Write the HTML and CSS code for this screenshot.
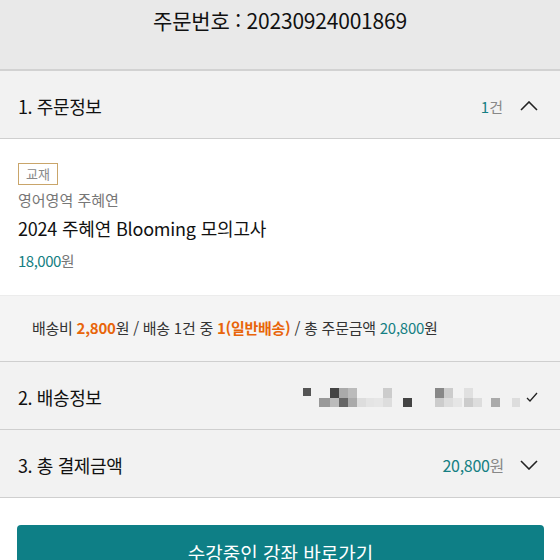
FILE: index.html
```html
<!DOCTYPE html>
<html lang="ko">
<head>
    <meta charset="UTF-8">
    <meta name="viewport" content="width=device-width, initial-scale=1.0">
    <title>주문완료</title>
    <link rel="stylesheet" href="styles.css">
</head>
<body>
    <div class="order-header">
        <h1 class="order-no">주문번호 : 20230924001869</h1>
    </div>

    <div class="section-row">
        <span class="section-title">1. 주문정보</span>
        <div class="section-right">
            <span class="count"><em>1</em>건</span>
            <svg class="chevron" width="18" height="10" viewBox="0 0 18 10"><path d="M1 9 L9 1 L17 9" fill="none" stroke="#222" stroke-width="1.6"/></svg>
        </div>
    </div>

    <div class="product">
        <span class="badge">교재</span>
        <div class="teacher">영어영역 주혜연</div>
        <div class="product-name">2024 주혜연 Blooming 모의고사</div>
        <div class="price">18,000<span>원</span></div>
    </div>

    <div class="delivery-summary">
        배송비 <b class="orange">2,800</b>원 / 배송 1건 중 <b class="orange">1(일반배송)</b> / 총 주문금액 <span class="teal">20,800</span>원
    </div>

    <div class="section-row">
        <span class="section-title">2. 배송정보</span>
        <div class="section-right">
            <svg class="masked" width="220" height="24" viewBox="0 0 220 24">
                <rect x="3" y="3" width="8" height="8" fill="#555"/>
                <rect x="30" y="3" width="9" height="10" fill="#444"/>
                <rect x="39" y="3" width="9" height="10" fill="#aaa"/>
                <rect x="48" y="3" width="9" height="10" fill="#bbb"/>
                <rect x="19" y="13" width="11" height="9" fill="#999"/>
                <rect x="30" y="13" width="9" height="9" fill="#bbb"/>
                <rect x="39" y="13" width="9" height="9" fill="#666"/>
                <rect x="48" y="13" width="9" height="9" fill="#aaa"/>
                <rect x="57" y="13" width="9" height="9" fill="#ddd"/>
                <rect x="66" y="13" width="9" height="9" fill="#e4e4e4"/>
                <rect x="83" y="3" width="9" height="10" fill="#ccc"/>
                <rect x="74" y="13" width="9" height="9" fill="#e6e6e6"/>
                <rect x="83" y="13" width="9" height="9" fill="#ddd"/>
                <rect x="103" y="13" width="9" height="9" fill="#444"/>
                <rect x="135" y="3" width="9" height="10" fill="#888"/>
                <rect x="144" y="3" width="9" height="10" fill="#ccc"/>
                <rect x="135" y="13" width="9" height="9" fill="#ccc"/>
                <rect x="144" y="13" width="9" height="9" fill="#ddd"/>
                <rect x="153" y="13" width="9" height="9" fill="#e6e6e6"/>
                <rect x="164" y="3" width="9" height="10" fill="#e0e0e0"/>
                <rect x="164" y="13" width="9" height="9" fill="#ccc"/>
                <rect x="173" y="13" width="9" height="9" fill="#ddd"/>
                <rect x="191" y="13" width="9" height="9" fill="#aaa"/>
                <rect x="212" y="13" width="8" height="9" fill="#ddd"/>
            </svg>
            <svg class="check" width="12" height="12" viewBox="0 0 12 12"><path d="M1 7 L4 10 L11 2" fill="none" stroke="#222" stroke-width="1.3"/></svg>
        </div>
    </div>

    <div class="section-row">
        <span class="section-title">3. 총 결제금액</span>
        <div class="section-right">
            <span class="total"><em>20,800</em>원</span>
            <svg class="chevron" width="18" height="10" viewBox="0 0 18 10"><path d="M1 1 L9 9 L17 1" fill="none" stroke="#222" stroke-width="1.6"/></svg>
        </div>
    </div>

    <div class="actions">
        <button class="go-button">수강중인 강좌 바로가기</button>
    </div>
</body>
</html>
```

FILE: styles.css
```css
body {
    margin: 0;
    background-color: #fff;
    font-family: "Noto Sans CJK KR", "Noto Sans", sans-serif;
    color: #111;
}
.order-header {
    height: 71px;
    box-sizing: border-box;
    padding-top: 6px;
    background-color: #e9e9e9;
    border-bottom: 2px solid #d2d2d2;
}
.order-no {
    margin: 0;
    font-size: 21px;
    font-weight: normal;
    line-height: 28px;
    text-align: center;
    letter-spacing: -0.2px;
}
.section-row {
    display: flex;
    justify-content: space-between;
    align-items: center;
    height: 68px;
    box-sizing: border-box;
    padding: 3px 22px 0 18px;
    background-color: #f2f2f2;
    border-bottom: 1px solid #cfcfcf;
}
.section-title {
    font-size: 18px;
    letter-spacing: -0.4px;
}
.section-right {
    display: flex;
    align-items: center;
}
.count, .total {
    font-size: 15px;
    color: #888;
    margin-right: 17px;
}
.total {
    font-size: 16px;
    letter-spacing: -0.3px;
    margin-right: 16px;
}
.count em, .total em {
    font-style: normal;
    color: #157f83;
}
.masked {
    margin-right: 6px;
}
.product {
    display: flex;
    flex-direction: column;
    align-items: flex-start;
    padding: 24px 18px 20px;
    height: 156px;
    box-sizing: border-box;
}
.badge {
    display: inline-block;
    width: 40px;
    height: 22px;
    line-height: 20px;
    box-sizing: border-box;
    border: 1px solid #c9a56a;
    font-size: 13px;
    color: #888;
    text-align: center;
}
.teacher {
    margin-top: 4px;
    font-size: 15px;
    color: #777;
    line-height: 22px;
}
.product-name {
    margin-top: 4px;
    font-size: 18px;
    line-height: 26px;
    letter-spacing: -0.2px;
}
.price {
    margin-top: 9px;
    font-size: 15px;
    line-height: 22px;
    color: #157f83;
    letter-spacing: -0.5px;
}
.price span {
    color: #777;
}
.delivery-summary {
    height: 67px;
    box-sizing: border-box;
    padding: 20px 32px 0;
    background-color: #f4f4f4;
    border-top: 1px solid #ececec;
    border-bottom: 1px solid #cfcfcf;
    font-size: 15px;
    line-height: 24px;
    color: #333;
    letter-spacing: -0.25px;
}
.orange {
    color: #e8650a;
}
.teal {
    color: #157f83;
}
.actions {
    padding: 27px 16px 0 17px;
}
.go-button {
    width: 100%;
    height: 56px;
    border: none;
    border-radius: 4px;
    background-color: #0e7f86;
    color: #fff;
    font-family: inherit;
    font-size: 19px;
    padding-top: 0;
}
```
